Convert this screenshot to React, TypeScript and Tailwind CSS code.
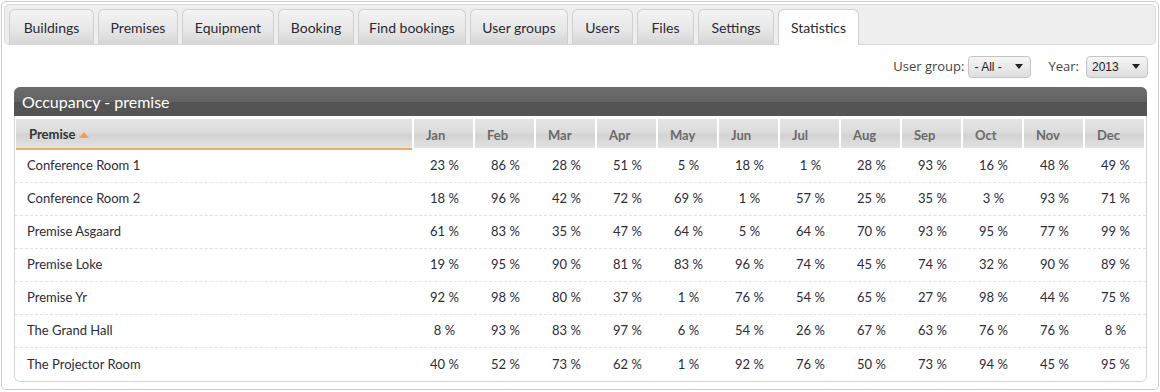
import React from 'react';

const tabs = ['Buildings', 'Premises', 'Equipment', 'Booking', 'Find bookings', 'User groups', 'Users', 'Files', 'Settings', 'Statistics'];
const tabWidths = [85, 80, 92, 76, 108, 98, 61, 57, 76, 81];
const months = ['Jan', 'Feb', 'Mar', 'Apr', 'May', 'Jun', 'Jul', 'Aug', 'Sep', 'Oct', 'Nov', 'Dec'];

const rows: [string, number[]][] = [
  ['Conference Room 1', [23, 86, 28, 51, 5, 18, 1, 28, 93, 16, 48, 49]],
  ['Conference Room 2', [18, 96, 42, 72, 69, 1, 57, 25, 35, 3, 93, 71]],
  ['Premise Asgaard', [61, 83, 35, 47, 64, 5, 64, 70, 93, 95, 77, 99]],
  ['Premise Loke', [19, 95, 90, 81, 83, 96, 74, 45, 74, 32, 90, 89]],
  ['Premise Yr', [92, 98, 80, 37, 1, 76, 54, 65, 27, 98, 44, 75]],
  ['The Grand Hall', [8, 93, 83, 97, 6, 54, 26, 67, 63, 76, 76, 8]],
  ['The Projector Room', [40, 52, 73, 62, 1, 92, 76, 50, 73, 94, 45, 95]],
];

const headBg = 'bg-[linear-gradient(#e4e4e4,#dcdcdc_45%,#d3d3d3_55%,#e2e2e2)]';

const Select: React.FC<{ value: string; width: string }> = ({ value, width }) => (
  <div
    className={`flex h-[22px] ${width} items-center justify-between rounded-[4px] border border-[#c4c4c4] bg-[linear-gradient(#f6f6f6,#dedede)] pl-[5px] pr-[7px] font-['Liberation_Sans',sans-serif] text-[12px] text-[#222]`}
  >
    <span>{value}</span>
    <svg width="8" height="5" viewBox="0 0 8 5">
      <path d="M0 0h8L4 5z" fill="#222" />
    </svg>
  </div>
);

const App: React.FC = () => {
  return (
    <div className="h-[392px] w-[1160px] overflow-hidden bg-white p-[1px] font-['Lato',sans-serif]">
      <div className="flex h-[389px] w-[1158px] flex-col rounded-[5px] border border-[#cccccc] p-[2px]">
        {/* tabs */}
        <div className="flex h-[41px] shrink-0 items-end gap-[4px] rounded-[5px] border border-[#d8d8d8] bg-[#eeeeee] pl-[4px]">
          {tabs.map((t, i) => (
            <div
              key={t}
              style={{ width: tabWidths[i] }}
              className={
                t === 'Statistics'
                  ? 'mb-[-1px] flex h-[36px] items-center justify-center rounded-t-[6px] border border-b-0 border-[#d0d0d0] bg-white pb-[1px] text-[14px] text-[#2a2a35]'
                  : 'flex h-[35px] items-center justify-center rounded-t-[6px] border border-b-0 border-[#cfcfcf] bg-[linear-gradient(#f4f4f4,#e6e6e6_60%,#d6d6d6)] pt-[1px] text-[14px] text-[#2a2a35]'
              }
            >
              {t}
            </div>
          ))}
        </div>

        {/* filters */}
        <div className="flex h-[42px] shrink-0 items-center justify-end gap-[4px] pr-[8px] pt-[1px] font-['Open_Sans',sans-serif] text-[13px] text-[#444]">
          <span>User group:</span>
          <Select value="- All -" width="w-[63px]" />
          <span className="ml-[13px] mr-[3px]">Year:</span>
          <Select value="2013" width="w-[62px]" />
        </div>

        {/* panel */}
        <div className="ml-[10px] mr-[9px] flex shrink-0 flex-col rounded-[6px] border border-[#d4d4d4]">
          <div className="-mx-px -mt-px flex h-[29px] items-center rounded-t-[6px] bg-[linear-gradient(#6c6c6c,#636363_50%,#535353_52%,#555555)] pl-[8px] text-[16px] text-white">
            Occupancy - premise
          </div>
          <div className="flex gap-[2px] pl-px pt-[3px]">
            <div className={`flex h-[31px] w-[396px] items-center border-b-2 border-[#f0ad5f] ${headBg} pl-[13px] pt-[2px] text-[13px] font-bold text-[#333]`}>
              Premise
              <svg width="10" height="6" viewBox="0 0 10 6" className="ml-[4px]">
                <path d="M0 6L5 0l5 6z" fill="#f0a050" />
              </svg>
            </div>
            {months.map((m) => (
              <div
                key={m}
                className={`flex h-[29px] w-[59px] items-center ${headBg} pl-[12px] pt-[4px] text-[13px] font-bold text-[#6a6a6a]`}
              >
                {m}
              </div>
            ))}
          </div>
          {rows.map(([name, vals], ri) => (
            <div
              key={name}
              className={`flex h-[33px] items-center pl-px text-[13px] text-[#2b2b3b] ${ri < rows.length - 1 ? 'border-b border-dashed border-[#e2e2e2]' : ''}`}
            >
              <div className="w-[398px] pl-[11px]">{name}</div>
              {vals.map((v, i) => (
                <div key={i} className="w-[61px] text-center">
                  {v} %
                </div>
              ))}
            </div>
          ))}
        </div>
      </div>
    </div>
  );
};

export default App;
